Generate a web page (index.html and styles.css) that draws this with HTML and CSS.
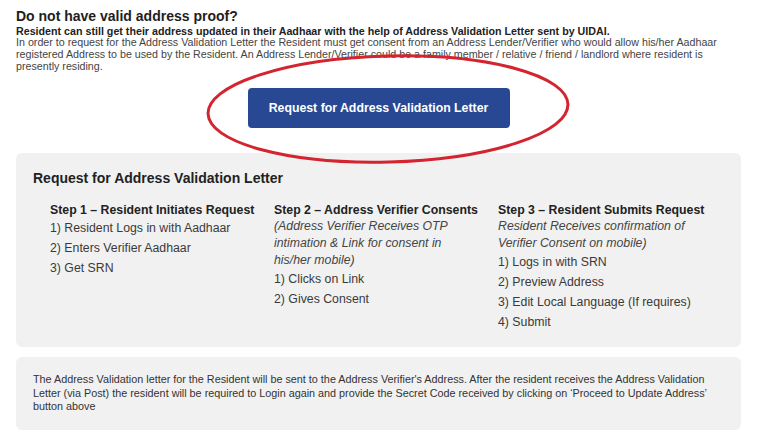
FILE: index.html
```html
<!DOCTYPE html>
<html>
<head>
<meta charset="utf-8">
<link rel="stylesheet" href="styles.css">
</head>
<body>
<div class="page">
  <h1 class="title">Do not have valid address proof?</h1>
  <p class="intro"><strong>Resident can still get their address updated in their Aadhaar with the help of Address Validation Letter sent by UIDAI.</strong><br>In order to request for the Address Validation Letter the Resident must get consent from an Address Lender/Verifier who would allow his/her Aadhaar registered Address to be used by the Resident. An Address Lender/Verifier could be a family member / relative / friend / landlord where resident is presently residing.</p>
  <div class="btn-row"><button class="btn">Request for Address Validation Letter</button></div>

  <section class="box steps-box">
    <h2 class="box-title">Request for Address Validation Letter</h2>
    <div class="steps">
      <div class="step">
        <h3 class="step-title">Step 1 – Resident Initiates Request</h3>
        <ul class="items">
          <li>1) Resident Logs in with Aadhaar</li>
          <li>2) Enters Verifier Aadhaar</li>
          <li>3) Get SRN</li>
        </ul>
      </div>
      <div class="step">
        <h3 class="step-title">Step 2 – Address Verifier Consents</h3>
        <p class="note">(Address Verifier Receives OTP intimation &amp; Link for consent in his/her mobile)</p>
        <ul class="items">
          <li>1) Clicks on Link</li>
          <li>2) Gives Consent</li>
        </ul>
      </div>
      <div class="step">
        <h3 class="step-title">Step 3 – Resident Submits Request</h3>
        <p class="note">Resident Receives confirmation of Verifier Consent on mobile)</p>
        <ul class="items">
          <li>1) Logs in with SRN</li>
          <li>2) Preview Address</li>
          <li>3) Edit Local Language (If requires)</li>
          <li>4) Submit</li>
        </ul>
      </div>
    </div>
  </section>

  <section class="box info-box">
    <p class="info">The Address Validation letter for the Resident will be sent to the Address Verifier's Address. After the resident receives the Address Validation Letter (via Post) the resident will be required to Login again and provide the Secret Code received by clicking on ‘Proceed to Update Address’ button above</p>
  </section>
</div>
<svg class="circle" width="768" height="438" viewBox="0 0 768 438">
  <ellipse cx="388" cy="109" rx="180" ry="53" fill="none" stroke="#d3242f" stroke-width="3" transform="rotate(-1.5 388 109)"/>
</svg>
</body>
</html>
```
FILE: styles.css
```css
* { box-sizing: border-box; }
html, body { margin: 0; padding: 0; background: #fff; }
body {
  font-family: "Liberation Sans", Arial, sans-serif;
  color: #333;
  width: 768px;
  height: 438px;
  overflow: hidden;
  position: relative;
}
.page {
  padding: 5.5px 0 0 16px;
  width: 741px;
}
.title {
  margin: 0;
  font-size: 14px;
  line-height: 20px;
  font-weight: bold;
  color: #1e1e1e;
}
.intro {
  margin: 0;
  font-size: 10.7px;
  line-height: 11.7px;
  color: #444;
}
.intro strong { color: #222; }
.btn-row {
  display: flex;
  justify-content: center;
  margin-top: 15.7px;
}
.btn {
  width: 262px;
  height: 40px;
  border: none;
  border-radius: 4px;
  background: #284894;
  color: #fff;
  font-family: "Liberation Sans", Arial, sans-serif;
  font-weight: bold;
  font-size: 12.3px;
  padding: 0;
}
.box {
  background: #f1f1f1;
  border-radius: 6px;
  width: 725px;
}
.steps-box {
  margin-top: 25px;
  height: 194px;
  padding: 16px 17px 0 17px;
}
.box-title {
  margin: 0;
  font-size: 14px;
  line-height: 18px;
  font-weight: bold;
  color: #222;
}
.steps {
  display: grid;
  grid-template-columns: repeat(3, 207px);
  column-gap: 17px;
  padding-left: 17px;
  margin-top: 14.5px;
}
.step-title {
  margin: 0;
  font-size: 12.3px;
  line-height: 16px;
  font-weight: bold;
  color: #222;
}
.note {
  margin: 0;
  font-size: 12.3px;
  line-height: 17px;
  font-style: italic;
  color: #444;
}
.items {
  list-style: none;
  margin: 0;
  padding: 0;
  font-size: 12.3px;
  line-height: 20px;
  color: #3a3a3a;
}
.info-box {
  margin-top: 10px;
  height: 73px;
  padding: 16px 17px 0 17px;
}
.info {
  margin: 0;
  font-size: 10.8px;
  line-height: 13.5px;
  color: #333;
}
.circle {
  position: absolute;
  top: 0;
  left: 0;
  pointer-events: none;
}
```
